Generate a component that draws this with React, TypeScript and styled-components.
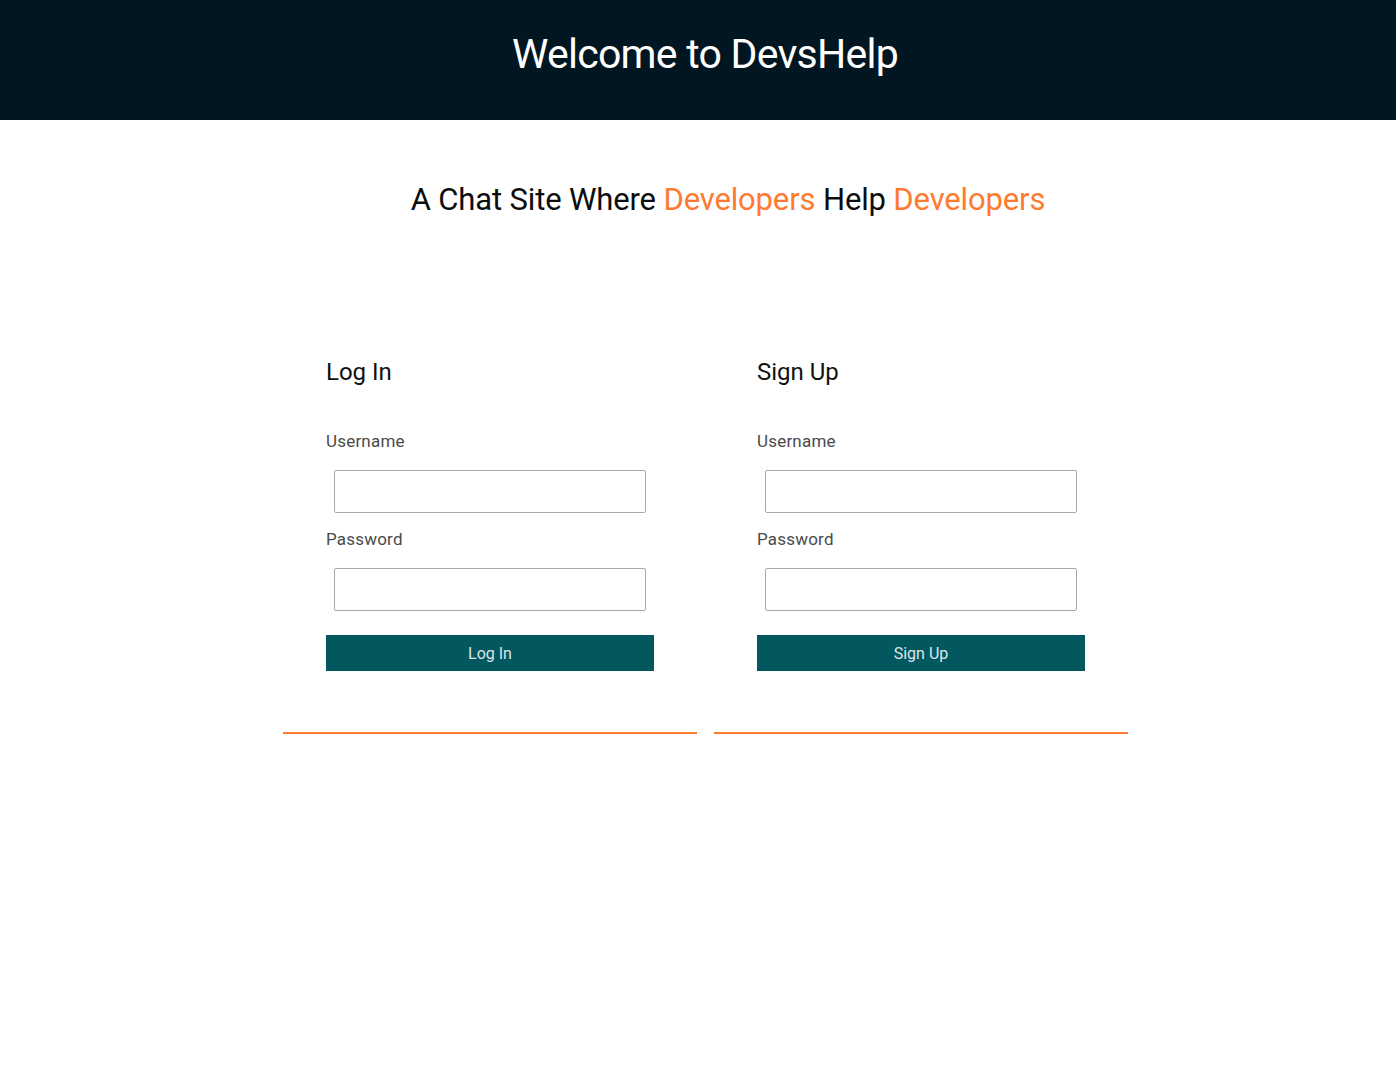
import React from "react";
import styled, { createGlobalStyle } from "styled-components";

const Global = createGlobalStyle`
  html, body { margin: 0; padding: 0; background: #ffffff; }
  body { font-family: Roboto, "Liberation Sans", sans-serif; }
  * { box-sizing: border-box; }
`;

const Header = styled.header`
  height: 120px;
  background: #011621;
  display: flex;
  align-items: center;
  justify-content: center;
  padding-left: 14px;
`;

const Title = styled.h1`
  margin: 0 0 12px 0;
  color: #ffffff;
  font-family: Roboto, "Liberation Sans", sans-serif;
  font-weight: 400;
  font-size: 41px;
  letter-spacing: -0.75px;
`;

const Tagline = styled.h2`
  margin: 62px 0 0 0;
  padding-left: 60px;
  text-align: center;
  font-weight: 400;
  font-size: 31px;
  line-height: 36px;
  letter-spacing: -0.15px;
  color: #0d0d0d;
`;

const Accent = styled.span`
  color: #fd7a30;
`;

const Columns = styled.main`
  display: flex;
  justify-content: center;
  gap: 17px;
  margin-top: 140px;
  padding-left: 15px;
`;

const Card = styled.section`
  width: 414px;
  padding: 0 0 61px 43px;
  border-bottom: 2px solid #fd7a30;
  display: flex;
  flex-direction: column;
  align-items: flex-start;
`;

const CardTitle = styled.h3`
  margin: 0 0 45px 0;
  font-weight: 400;
  font-size: 24px;
  line-height: 28px;
  color: #111111;
`;

const Label = styled.label`
  font-size: 17px;
  line-height: 20px;
  letter-spacing: 0.2px;
  color: #4a4a4a;
`;

const Input = styled.input`
  display: block;
  width: 312px;
  height: 43px;
  margin: 19px 0 16px 8px;
  border: 1px solid #a9a9a9;
  border-radius: 2px;
  background: #ffffff;
  font-family: Roboto, "Liberation Sans", sans-serif;
  font-size: 16px;
  padding: 0 8px;
  outline: none;
`;

const Button = styled.button`
  width: 328px;
  height: 36px;
  margin-top: 8px;
  border: none;
  background: #03575f;
  color: #d9e8ea;
  font-family: Roboto, "Liberation Sans", sans-serif;
  font-size: 16px;
  cursor: pointer;
`;

const FormCard: React.FC<{ title: string; action: string }> = ({ title, action }) => (
  <Card>
    <CardTitle>{title}</CardTitle>
    <Label>Username</Label>
    <Input type="text" />
    <Label>Password</Label>
    <Input type="password" />
    <Button>{action}</Button>
  </Card>
);

export default function App() {
  return (
    <>
      <Global />
      <Header>
        <Title>Welcome to DevsHelp</Title>
      </Header>
      <Tagline>
        A Chat Site Where <Accent>Developers</Accent> Help <Accent>Developers</Accent>
      </Tagline>
      <Columns>
        <FormCard title="Log In" action="Log In" />
        <FormCard title="Sign Up" action="Sign Up" />
      </Columns>
    </>
  );
}
